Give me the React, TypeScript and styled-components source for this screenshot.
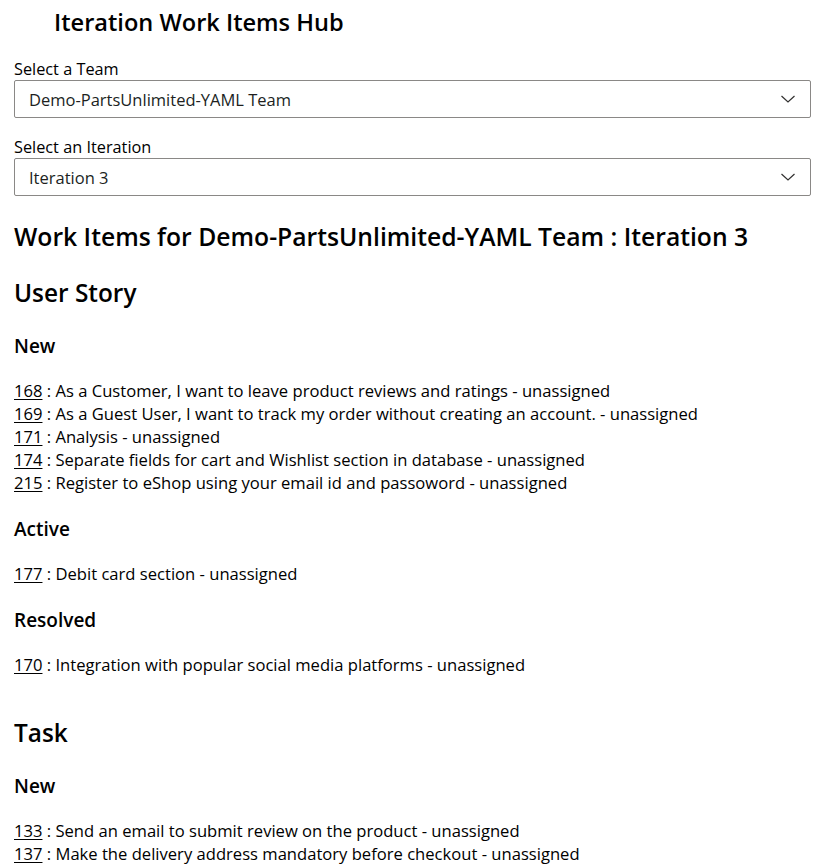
import { createGlobalStyle, styled } from "styled-components";

type WorkItem = { id: number; title: string; assignee: string };
type StatusGroupData = { status: string; items: WorkItem[] };
type TypeGroupData = { type: string; groups: StatusGroupData[] };

const team = "Demo-PartsUnlimited-YAML Team";
const iteration = "Iteration 3";

const data: TypeGroupData[] = [
  {
    type: "User Story",
    groups: [
      {
        status: "New",
        items: [
          { id: 168, title: "As a Customer, I want to leave product reviews and ratings", assignee: "unassigned" },
          { id: 169, title: "As a Guest User, I want to track my order without creating an account.", assignee: "unassigned" },
          { id: 171, title: "Analysis", assignee: "unassigned" },
          { id: 174, title: "Separate fields for cart and Wishlist section in database", assignee: "unassigned" },
          { id: 215, title: "Register to eShop using your email id and passoword", assignee: "unassigned" },
        ],
      },
      {
        status: "Active",
        items: [{ id: 177, title: "Debit card section", assignee: "unassigned" }],
      },
      {
        status: "Resolved",
        items: [{ id: 170, title: "Integration with popular social media platforms", assignee: "unassigned" }],
      },
    ],
  },
  {
    type: "Task",
    groups: [
      {
        status: "New",
        items: [
          { id: 133, title: "Send an email to submit review on the product", assignee: "unassigned" },
          { id: 137, title: "Make the delivery address mandatory before checkout", assignee: "unassigned" },
        ],
      },
    ],
  },
];

const GlobalStyle = createGlobalStyle`
  html, body {
    margin: 0;
    background: #ffffff;
  }
  body {
    font-family: "Open Sans", "Noto Sans", "Liberation Sans", sans-serif;
    color: #000000;
    -webkit-font-smoothing: antialiased;
  }
`;

const Page = styled.div`
  padding: 6px 8px 0 14px;
`;

const HubTitle = styled.h1`
  margin: 0 0 0 40px;
  font-size: 23.6px;
  line-height: 32px;
  font-weight: 600;
`;

const Field = styled.div`
  margin-top: 21px;

  & + & {
    margin-top: 19px;
  }
`;

const Label = styled.div`
  font-size: 16.3px;
  line-height: 20px;
`;

const SelectBox = styled.div`
  margin-top: 1px;
  height: 38px;
  box-sizing: border-box;
  border: 1px solid #8a8886;
  border-radius: 2px;
  padding: 0 14px;
  display: flex;
  align-items: center;
  justify-content: space-between;
  font-size: 16.5px;
  color: #201f1e;
`;

const Chevron = styled.svg`
  width: 16px;
  height: 10px;
  flex: none;
`;

const ResultsTitle = styled.h2`
  margin: 25px 0 0;
  font-size: 24.7px;
  line-height: 32px;
  font-weight: 600;
`;

const TypeSection = styled.section`
  margin-top: 24px;

  & + & {
    margin-top: 41px;
  }
`;

const TypeTitle = styled.h3`
  margin: 0;
  font-size: 24.4px;
  line-height: 32px;
  font-weight: 600;
`;

const StatusTitle = styled.h4`
  margin: 23px 0 21px;
  font-size: 19px;
  line-height: 24px;
  font-weight: 600;

  ${TypeTitle} + div > & {
    margin-top: 25px;
  }
`;

const ItemList = styled.div`
  display: flex;
  flex-direction: column;
`;

const ItemRow = styled.div`
  font-size: 16.6px;
  line-height: 23px;
  white-space: nowrap;
`;

const ItemLink = styled.a`
  color: #000000;
  text-decoration: underline;
  text-underline-offset: 2px;
  text-decoration-thickness: 1px;
`;

const Dropdown = ({ label, value }: { label: string; value: string }) => (
  <Field>
    <Label>{label}</Label>
    <SelectBox>
      <span>{value}</span>
      <Chevron viewBox="0 0 16 10">
        <path d="M1.5 2 L8 8 L14.5 2" fill="none" stroke="#323130" strokeWidth="1.2" />
      </Chevron>
    </SelectBox>
  </Field>
);

export default function App() {
  return (
    <Page>
      <GlobalStyle />
      <HubTitle>Iteration Work Items Hub</HubTitle>
      <Dropdown label="Select a Team" value={team} />
      <Dropdown label="Select an Iteration" value={iteration} />
      <ResultsTitle>
        Work Items for {team} : {iteration}
      </ResultsTitle>
      {data.map((t) => (
        <TypeSection key={t.type}>
          <TypeTitle>{t.type}</TypeTitle>
          {t.groups.map((g) => (
            <div key={g.status}>
              <StatusTitle>{g.status}</StatusTitle>
              <ItemList>
                {g.items.map((item) => (
                  <ItemRow key={item.id}>
                    <ItemLink href="#">{item.id}</ItemLink> : {item.title} - {item.assignee}
                  </ItemRow>
                ))}
              </ItemList>
            </div>
          ))}
        </TypeSection>
      ))}
    </Page>
  );
}
